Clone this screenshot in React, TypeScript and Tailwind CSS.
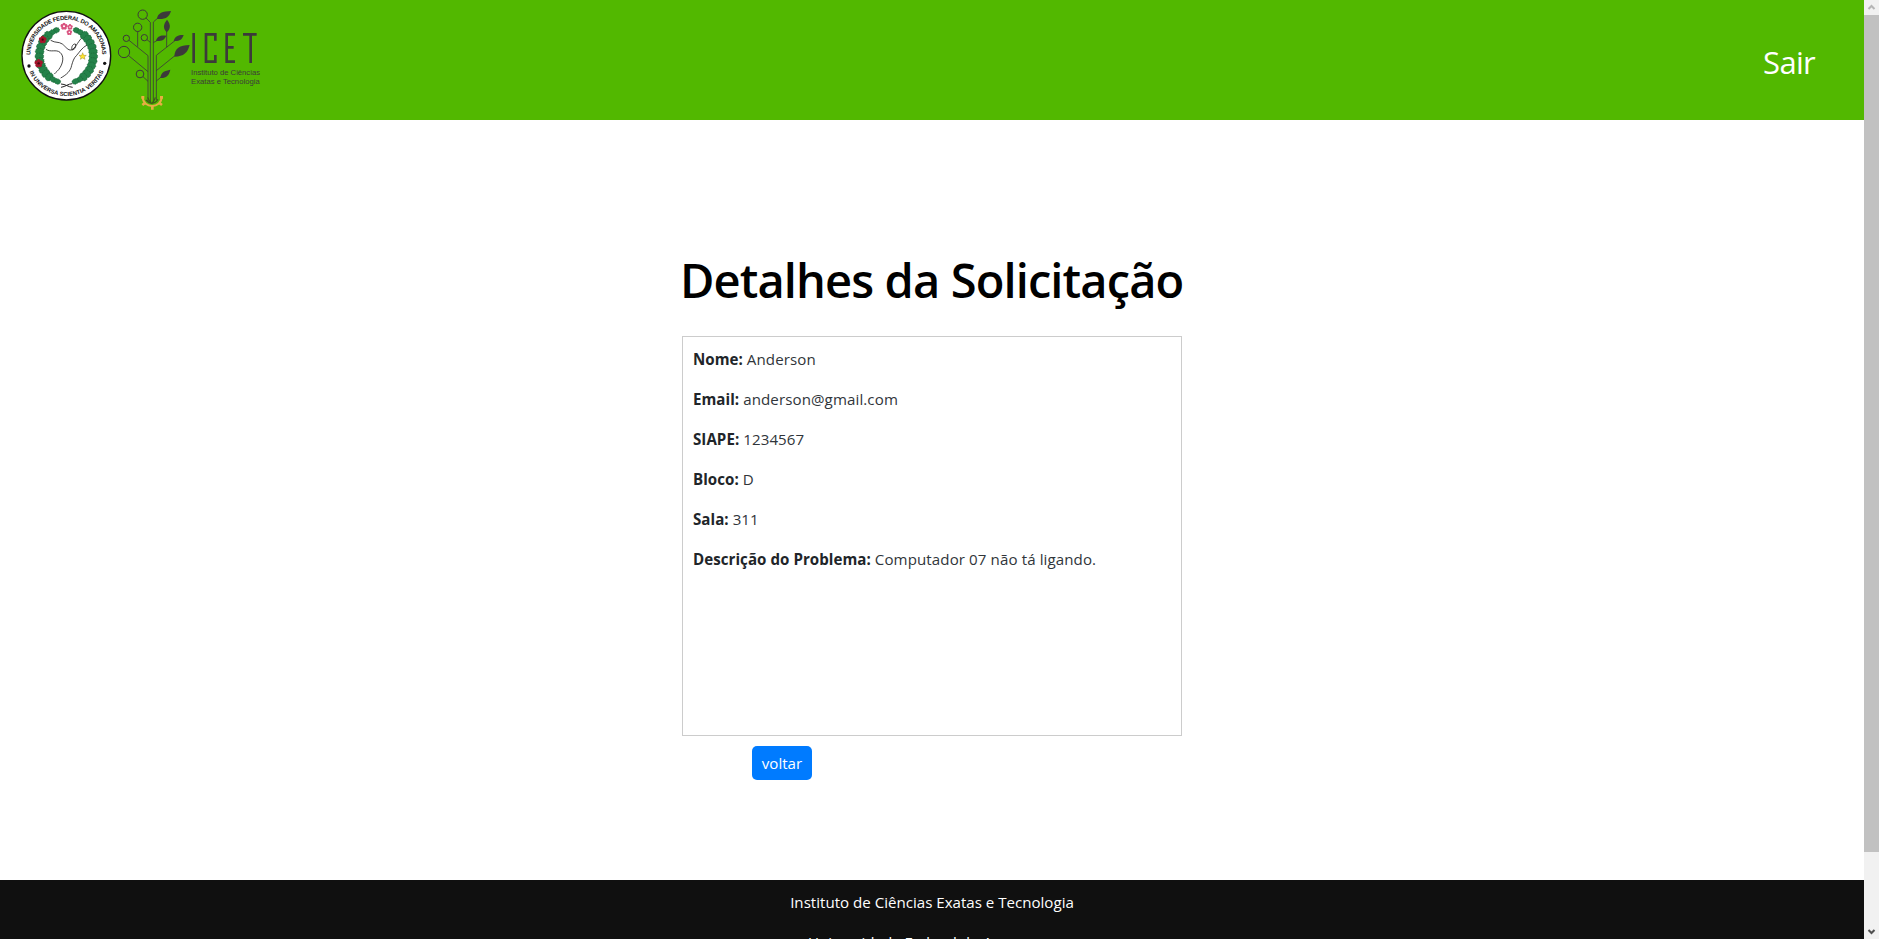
import React from "react";

const details = [
  { label: "Nome:", value: "Anderson" },
  { label: "Email:", value: "anderson@gmail.com" },
  { label: "SIAPE:", value: "1234567" },
  { label: "Bloco:", value: "D" },
  { label: "Sala:", value: "311" },
  { label: "Descrição do Problema:", value: "Computador 07 não tá ligando." },
];

const wreathAngles = Array.from({ length: 15 }, (_, i) => 22 + i * 9.9);

function Wreath() {
  return (
    <g fill="#24824a" stroke="#1b6438" strokeWidth="2" strokeDasharray="4 3">
      {wreathAngles.map((a, i) => {
        const t = (a * Math.PI) / 180;
        const dx = Math.sin(t) * 81;
        const y = 167 - Math.cos(t) * 82;
        const thickness = i < 2 || i > 12 ? 8 : 13;
        return (
          <g key={a}>
            <ellipse cx={169 + dx} cy={y} rx="10" ry={thickness} transform={`rotate(${a} ${169 + dx} ${y})`} />
            <ellipse cx={169 - dx} cy={y} rx="10" ry={thickness} transform={`rotate(${-a} ${169 - dx} ${y})`} />
          </g>
        );
      })}
    </g>
  );
}

function Flower({ x, y, r, color, core }: { x: number; y: number; r: number; color: string; core: string }) {
  return (
    <g fill={color}>
      {[0, 72, 144, 216, 288].map((a) => (
        <circle key={a} cx={x} cy={y - r * 0.6} r={r * 0.48} transform={`rotate(${a} ${x} ${y})`} />
      ))}
      <circle cx={x} cy={y} r={r * 0.3} fill={core} />
    </g>
  );
}

function UniversitySeal() {
  return (
    <svg className="h-[120px] w-[102px] shrink-0" viewBox="0 0 306 360">
      <defs>
        <path id="arc-top" d="M61 167 A108 108 0 0 1 277 167" />
        <path id="arc-bottom" d="M48 167 A121 121 0 0 0 290 167" />
      </defs>
      <circle cx="169" cy="167" r="133" fill="#fff" stroke="#111" strokeWidth="4" />
      <g fontFamily="Liberation Sans, sans-serif" fontWeight="700" fontSize="17.5" fill="#111">
        <text>
          <textPath href="#arc-top" startOffset="2" textLength="334">UNIVERSIDADE FEDERAL DO AMAZONAS</textPath>
        </text>
        <text>
          <textPath href="#arc-bottom" startOffset="50" textLength="282">IN UNIVERSA SCIENTIA VERITAS</textPath>
        </text>
      </g>
      <circle cx="57" cy="198" r="5" fill="#111" />
      <circle cx="284" cy="190" r="5" fill="#111" />
      <Wreath />
      <Flower x={162} y={79} r={10} color="#d9527f" core="#fff" />
      <Flower x={180} y={81} r={8} color="#d9527f" core="#fff" />
      <Flower x={178} y={97} r={8} color="#d9527f" core="#fff" />
      <Flower x={98} y={119} r={11} color="#a3152b" core="#4a0712" />
      <Flower x={86} y={190} r={12} color="#a3152b" core="#4a0712" />
      <g fill="none" stroke="#222" strokeWidth="2.5">
        <path d="M122 121 C138 130 145 124 157 132 C167 140 174 152 184 150 C196 145 202 128 214 115" />
        <path d="M108 148 C122 158 138 147 150 157 C164 169 158 190 150 203 C145 212 138 216 133 222" />
        <path d="M231 135 C216 143 208 157 200 166 C191 174 188 186 185 196 C182 213 170 224 152 234" />
        <path d="M186 150 C183 139 190 131 196 132 C199 140 196 148 186 150Z" />
        <path d="M153 262 C167 260 175 251 187 251 M153 252 C166 252 174 261 188 262" strokeWidth="3" />
      </g>
      <path d="M218 158 L221 166 L229 166 L223 171 L225 178 L218 174 L211 178 L213 171 L207 166 L215 166Z" fill="#ffe62e" stroke="#8a7a16" strokeWidth="1.2" />
    </svg>
  );
}

function IcetLogo() {
  return (
    <svg className="h-[120px] w-[158px] shrink-0" viewBox="6 0 474 360">
      <g fill="none" stroke="#3c3a3a" strokeWidth="3">
        <circle cx="98" cy="44" r="14" />
        <circle cx="83" cy="82" r="12.5" />
        <circle cx="49" cy="115" r="9.5" />
        <circle cx="103" cy="113" r="9.5" />
        <circle cx="42" cy="156" r="17" />
        <circle cx="90" cy="222" r="11.5" />
        <g strokeWidth="2.5">
          <path d="M108 54 L121 67 V306 M83 95 V140 M57 121 L114 167 V304 M111 119 L121 127 M56 167 L114 215 M99 230 L114 244" />
          <path d="M146 52 L130 66 V306 M170 94 V142 M200 118 L139 166 V300 M147 118 L130 128 M196 166 L139 212 M156 229 L139 243" />
        </g>
      </g>
      <g fill="#3c3a3a">
        <path d="M141 57 C142 39 158 34 183 33 C178 50 168 59 141 57Z" />
        <path d="M171 59 C185 76 180 88 170 97 C158 84 160 73 171 59Z" />
        <path d="M138 123 C141 107 154 105 169 107 C163 120 155 124 138 123Z" />
        <path d="M191 123 C195 107 208 104 221 105 C216 120 208 124 191 123Z" />
        <path d="M193 170 C194 144 209 136 239 135 C233 157 222 170 193 170Z" />
        <path d="M151 234 C153 216 164 212 181 209 C177 227 168 235 151 234Z" />
      </g>
      <path d="M108 300 Q116 309 125 310 Q137 309 144 298 M113 292 Q117 303 124 309 M136 292 Q133 303 127 309" fill="none" stroke="#3c5a16" strokeWidth="3.5" />
      <path d="M98 291 C99 327 154 327 155 291" fill="none" stroke="#e7ad43" strokeWidth="6" />
      <path d="M94 292 H103 M150 292 H159 M97 315 L105 309 M156 315 L148 309 M127 317 V329" fill="none" stroke="#e7ad43" strokeWidth="8" />
      <g fill="none" stroke="#3c3a3a" strokeWidth="8">
        <path d="M251 99 V189" />
        <path d="M316 122 V103 H288 V185 H316 V165" />
        <path d="M375 103 H350 V185 H375 M350 142 H371" />
        <path d="M399 103 H440 M422 103 V189" />
      </g>
      <g fontFamily="Liberation Sans, sans-serif" fontSize="22.5" fill="#3c3a3a">
        <text x="243" y="226" textLength="207" lengthAdjust="spacingAndGlyphs">Instituto de Ciências</text>
        <text x="243" y="251" textLength="206" lengthAdjust="spacingAndGlyphs">Exatas e Tecnologia</text>
      </g>
    </svg>
  );
}

function Scrollbar() {
  return (
    <div className="flex h-full w-[15px] shrink-0 flex-col bg-[#f1f1f1]">
      <svg className="h-[15px] w-[15px] shrink-0" viewBox="0 0 15 15">
        <path d="M4.5 9 L7.5 6 L10.5 9" fill="none" stroke="#b5b5b5" strokeWidth="2" />
      </svg>
      <div className="h-[837px] bg-[#c1c1c1]" />
      <svg className="mt-auto h-[15px] w-[15px] shrink-0" viewBox="0 0 15 15">
        <path d="M4.5 6 L7.5 9 L10.5 6" fill="none" stroke="#505050" strokeWidth="2" />
      </svg>
    </div>
  );
}

export default function App() {
  return (
    <div className="flex h-[939px] w-full overflow-hidden bg-white font-['Open_Sans','Noto_Sans',sans-serif] text-[15.1px] text-[#212529]">
      <div className="flex h-full min-w-0 flex-1 flex-col">
        <header className="flex h-[120px] shrink-0 justify-between bg-[#52b800] pl-[10px]">
          <div className="flex">
            <UniversitySeal />
            <IcetLogo />
          </div>
          <a className="mt-[38px] mr-[49px] text-[31px] leading-[48px] tracking-[-0.7px] text-white">Sair</a>
        </header>
        <main className="flex h-[760px] shrink-0 flex-col items-center pt-[131px]">
          <div className="flex w-[500px] flex-col">
            <h1 className="-ml-[2px] text-[47px] leading-[58px] font-semibold tracking-[-0.88px] whitespace-nowrap text-black">
              Detalhes da Solicitação
            </h1>
            <section className="mt-[27px] flex h-[400px] flex-col gap-4 border border-[#ccc] p-[10px]">
              {details.map((d) => (
                <p key={d.label} className="leading-6 whitespace-nowrap">
                  <strong className="font-bold tracking-[0.05px]">{d.label}</strong>{" "}
                  <span className="tracking-[0.1px] text-[#30353a]">{d.value}</span>
                </p>
              ))}
            </section>
            <button className="mt-[10px] ml-[70px] h-[34px] w-[60px] rounded-[5px] bg-[#007bff] text-white">voltar</button>
          </div>
        </main>
        <footer className="flex shrink-0 flex-col items-center gap-4 bg-[#101010] pt-[10px] leading-6 text-white">
          <p>Instituto de Ciências Exatas e Tecnologia</p>
          <p>Universidade Federal do Amazonas</p>
        </footer>
      </div>
      <Scrollbar />
    </div>
  );
}
